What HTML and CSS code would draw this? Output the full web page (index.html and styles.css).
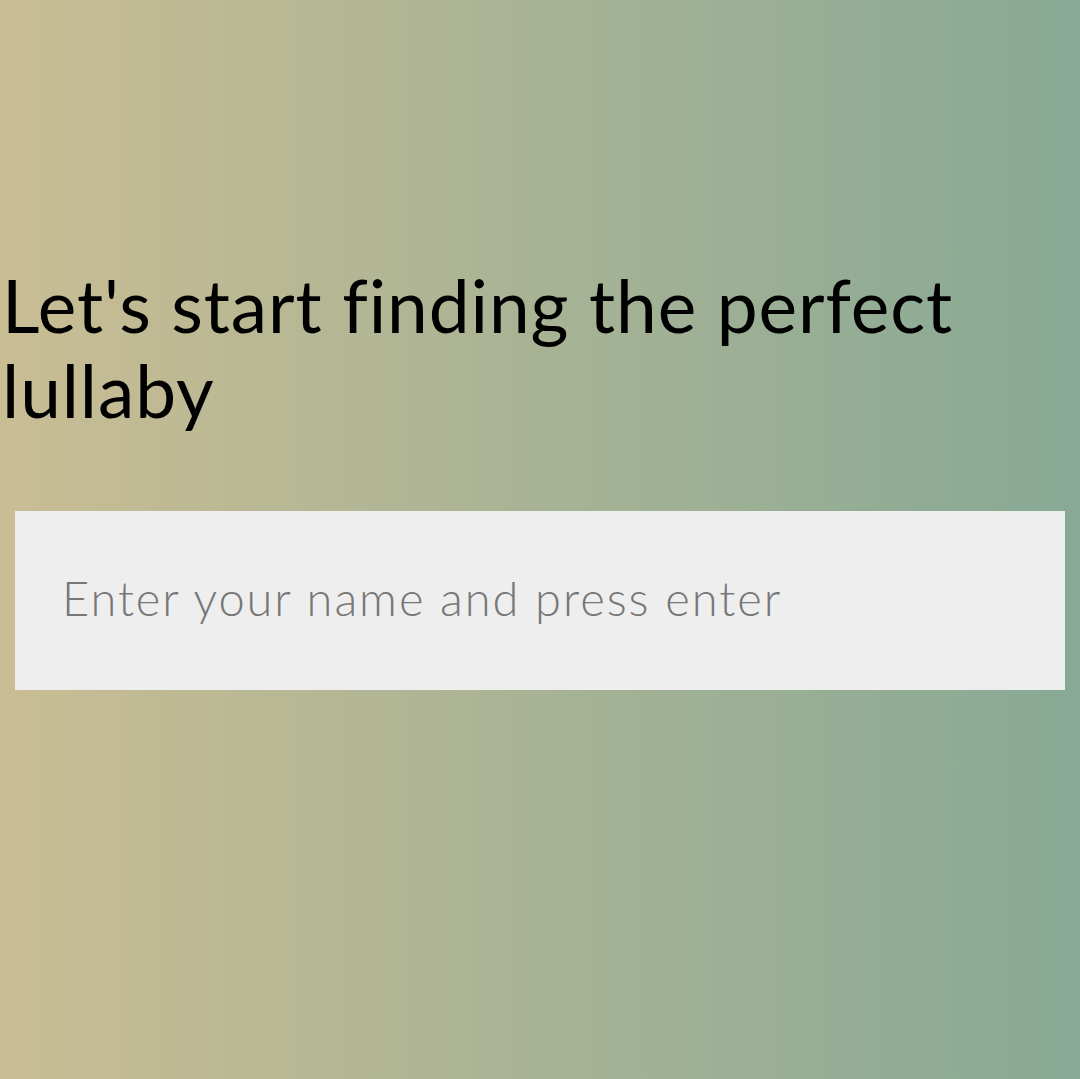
FILE: index.html
```html
<!DOCTYPE html>
<html lang="en">
<head>
<meta charset="utf-8">
<title>Lullaby</title>
<link rel="stylesheet" href="styles.css">
</head>
<body>
<main class="page">
  <h1 class="title">Let's start finding the perfect lullaby</h1>
  <input class="name-input" type="text" placeholder="Enter your name and press enter">
</main>
</body>
</html>
```

FILE: styles.css
```css
html, body {
  margin: 0;
  padding: 0;
  height: 100%;
}
body {
  background: linear-gradient(to right, #c9bd94 0%, #87a995 100%);
  font-family: "Lato", "Liberation Sans", sans-serif;
  color: #000;
}
.page {
  display: flex;
  flex-direction: column;
  padding-top: 263px;
}
.title {
  margin: 0 0 0 2px;
  font-size: 73px;
  font-weight: 400;
  line-height: 85px;
  letter-spacing: 0.9px;
  width: 1000px;
}
.name-input {
  margin: 78px 15px 0 15px;
  height: 179px;
  box-sizing: border-box;
  border: none;
  outline: none;
  background: #eeeeee;
  padding: 0 0 6px 47px;
  font-family: "Lato", "Liberation Sans", sans-serif;
  font-size: 47px;
  font-weight: 300;
  letter-spacing: 1.95px;
  color: #333;
}
.name-input::placeholder {
  color: #777777;
  opacity: 1;
}
```
